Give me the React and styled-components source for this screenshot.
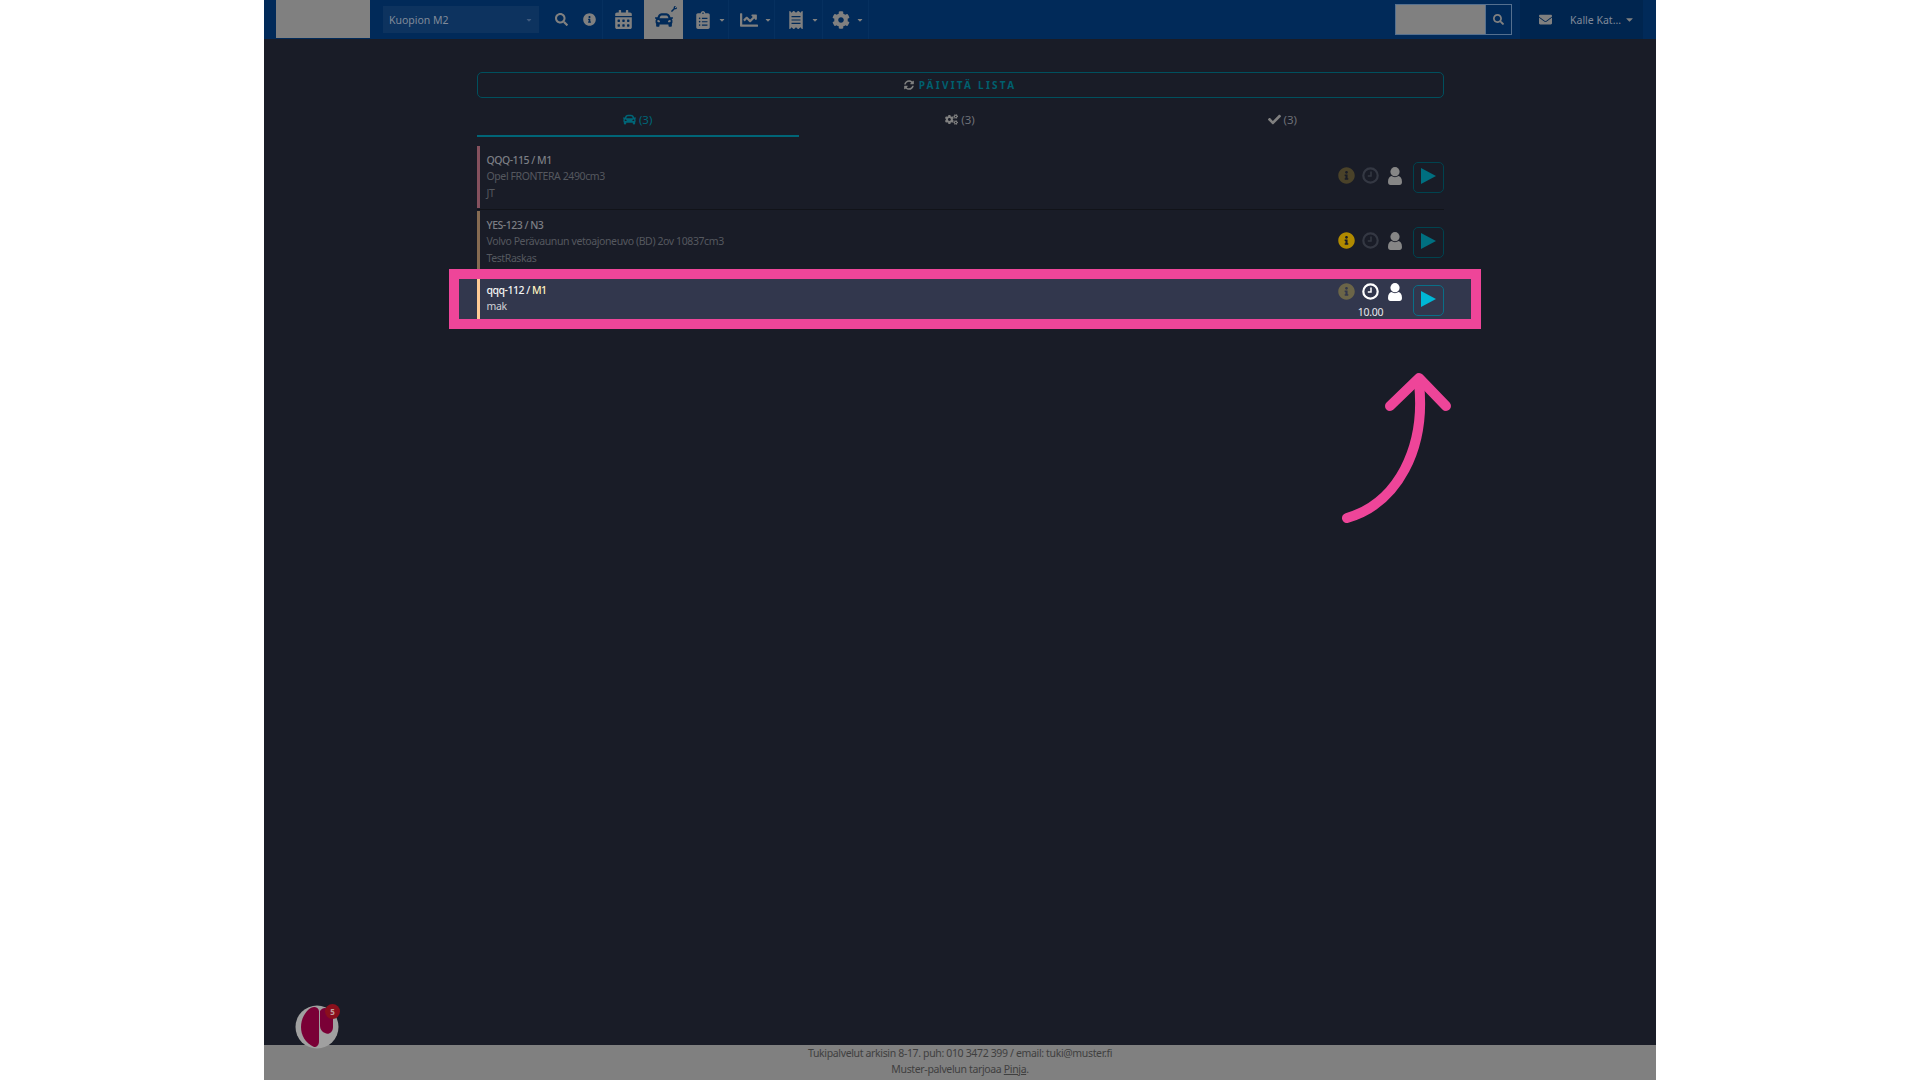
import React from "react";
import styled, { createGlobalStyle } from "styled-components";
import {
  FaSearch, FaInfoCircle, FaCalendarAlt, FaCar, FaWrench, FaClipboardList, FaChartLine,
  FaReceipt, FaCog, FaCogs, FaCaretDown, FaEnvelope, FaSyncAlt, FaCheck,
} from "react-icons/fa";

const Global = createGlobalStyle`
  html, body { margin: 0; padding: 0; background: #fff; }
  body { font-family: "Noto Sans", "Open Sans", sans-serif; }
  * { box-sizing: border-box; }
`;

const Page = styled.div`
  position: relative;
  width: 1392px;
  height: 1080px;
  margin: 0 auto;
  display: flex;
  flex-direction: column;
  background: #191c27;
`;

const Nav = styled.header`
  flex: none;
  height: 39px;
  background: #012a59;
  display: flex;
  align-items: flex-start;
  padding-left: 12px;
  color: #808080;
`;

const LogoBlock = styled.div`
  width: 94px;
  height: 38px;
  background: #808080;
`;

const SelectBox = styled.div`
  width: 156px;
  height: 27px;
  margin: 6px 7px 0 13px;
  padding: 0 6px;
  background: #0d335f;
  color: #808a99;
  font-size: 10.5px;
  display: flex;
  align-items: center;
  justify-content: space-between;
`;

const NavIcon = styled.div`
  width: ${(p) => p.$w}px;
  height: 39px;
  display: flex;
  align-items: center;
  justify-content: center;
  gap: 6px;
  padding-left: ${(p) => p.$pad || 0}px;
  font-size: ${(p) => p.$size || 18}px;
  position: relative;
  background: ${(p) => (p.$active ? "#808080" : "transparent")};
  color: ${(p) => (p.$active ? "#012a59" : "#808080")};
  border-right: ${(p) => (p.$sep ? "1px solid #06305f" : "none")};
`;

const Caret = styled(FaCaretDown)`
  font-size: ${(p) => p.$size || 8}px;
  color: ${(p) => p.$color || "#808080"};
`;

const Tool = styled(FaWrench)`
  position: absolute;
  right: 6px;
  top: 6px;
  font-size: 6px;
`;

const Spacer = styled.div`
  flex: 1;
`;

const SearchGroup = styled.div`
  width: 117px;
  height: 31px;
  margin: 4px 8px 0 0;
  display: flex;
  border: 1px solid #55708f;
`;

const SearchField = styled.div`
  width: 89px;
  background: #808080;
`;

const SearchButton = styled.div`
  flex: 1;
  display: flex;
  align-items: center;
  justify-content: center;
  color: #808080;
  font-size: 11px;
  border-left: 1px solid #55708f;
`;

const UserArea = styled.div`
  width: 123px;
  height: 39px;
  margin-right: 13px;
  background: #00254f;
  display: flex;
  align-items: center;
  padding-left: 19px;
  color: #808a99;
  font-size: 10.5px;
`;

const Mail = styled(FaEnvelope)`
  font-size: 13px;
  color: #808080;
  margin-right: 18px;
`;

const UserName = styled.span`
  margin-right: 3px;
`;

const Main = styled.main`
  flex: 1;
  width: 967px;
  margin: 0 auto;
  padding-top: 33px;
`;

const RefreshButton = styled.div`
  height: 26px;
  border: 1px solid #00505e;
  border-radius: 5px;
  display: flex;
  align-items: center;
  justify-content: center;
  gap: 5px;
  color: #00606f;
  font-size: 10px;
  font-weight: 700;
  letter-spacing: 2.25px;
`;

const RefreshIcon = styled(FaSyncAlt)`
  color: #808080;
  font-size: 10px;
`;

const Tabs = styled.div`
  display: grid;
  grid-template-columns: repeat(3, 1fr);
  height: 39px;
`;

const Tab = styled.div`
  display: flex;
  align-items: center;
  justify-content: center;
  gap: 3px;
  padding-top: 6px;
  height: 39px;
  font-size: 11.5px;
  color: ${(p) => (p.$active ? "#006577" : "#6e7077")};
  border-bottom: 2px solid ${(p) => (p.$active ? "#006577" : "transparent")};
`;

const TabIcon = styled.span`
  display: flex;
  font-size: 13px;
  color: ${(p) => (p.$active ? "#006577" : "#808080")};
`;

const List = styled.div`
  margin-top: 9px;
`;

const Row = styled.div`
  position: relative;
  height: ${(p) => (p.$highlight ? 49 : 62)}px;
  margin-bottom: 3px;
  display: flex;
  align-items: center;
  justify-content: space-between;

  &::after {
    content: "";
    position: absolute;
    left: 0;
    right: 0;
    bottom: -2px;
    height: 1px;
    background: #111319;
  }

  ${(p) =>
    p.$highlight &&
    `
    &::before {
      content: "";
      position: absolute;
      left: -18px; right: -27px; top: 3px; bottom: 6px;
      background: #32374d;
    }
    &::after {
      left: -28px; right: -37px; top: -7px; bottom: -4px;
      height: auto;
      background: transparent;
      border: 10px solid #ee4599;
      z-index: 3;
    }
  `}
`;

const Bar = styled.div`
  position: absolute;
  left: 0;
  top: ${(p) => (p.$highlight ? 3 : 0)}px;
  bottom: ${(p) => (p.$highlight ? 6 : 0)}px;
  width: 3px;
  background: ${(p) => p.$color};
  z-index: 1;
`;

const RowText = styled.div`
  position: relative;
  z-index: 1;
  padding-left: 10px;
  align-self: flex-start;
  padding-top: 6px;
  font-size: 10.5px;
  line-height: 16.4px;
`;

const Title = styled.div`
  color: ${(p) => (p.$highlight ? "#f4f4f4" : "#7c7e84")};
  font-weight: 500;
  letter-spacing: -0.5px;
`;

const Class = styled.span`
  color: ${(p) => (p.$highlight ? "#fff2c0" : "inherit")};
`;

const Sub = styled.div`
  color: ${(p) => (p.$highlight ? "#d0d0d4" : "#55585f")};
  letter-spacing: -0.4px;
`;

const Actions = styled.div`
  position: relative;
  z-index: 1;
  display: flex;
  align-items: center;
`;

const IconCluster = styled.div`
  display: flex;
  align-items: flex-start;
  margin-right: 6px;
  padding-bottom: ${(p) => (p.$highlight ? 0 : 3)}px;
`;

const IconCell = styled.div`
  width: 24px;
  display: flex;
  flex-direction: column;
  align-items: center;
`;

const IconBox = styled.div`
  height: 18px;
  display: flex;
  align-items: center;
  justify-content: center;
  font-size: ${(p) => p.$size || 16}px;
  color: ${(p) => p.$color};
`;

const Time = styled.div`
  margin-top: 4px;
  height: 14px;
  line-height: 14px;
  font-size: 10.5px;
  letter-spacing: -0.3px;
  color: #e8e8ee;
  white-space: nowrap;
`;

const PlayButton = styled.div`
  width: 31px;
  height: 31px;
  padding-bottom: 3px;
  border: 1px solid ${(p) => (p.$highlight ? "#0a6f87" : "#00434f")};
  border-radius: 5px;
  display: flex;
  align-items: center;
  justify-content: center;
  color: ${(p) => (p.$highlight ? "#00b7d6" : "#006f80")};
`;

const Footer = styled.footer`
  flex: none;
  height: 35px;
  background: #808080;
  color: #3f3f3f;
  font-size: 10.5px;
  letter-spacing: -0.35px;
  line-height: 16px;
  text-align: center;
`;

const FooterLink = styled.span`
  text-decoration: underline;
`;

const Arrow = styled.svg`
  position: absolute;
  left: 1072px;
  top: 363px;
`;

const Chat = styled.div`
  position: absolute;
  left: 31px;
  top: 1005px;
  width: 44px;
  height: 44px;
`;

const ChatBadge = styled.div`
  position: absolute;
  left: 30px;
  top: -1px;
  width: 15px;
  height: 15px;
  border-radius: 50%;
  background: #8a0f1c;
  color: #c0a0a0;
  font-size: 8px;
  font-weight: 700;
  display: flex;
  align-items: center;
  justify-content: center;
`;

const ClockIcon = () => (
  <svg width="17" height="17" viewBox="0 0 17 17" fill="none" stroke="currentColor">
    <circle cx="8.5" cy="8.5" r="7.2" strokeWidth="2.2" />
    <path d="M9 4.5V9H5.8" strokeWidth="1.5" />
  </svg>
);

const PersonIcon = () => (
  <svg width="14" height="18" viewBox="0 0 14 18" fill="currentColor">
    <circle cx="7" cy="4.7" r="4.6" />
    <path d="M0 15C0 11.5 1.5 9.2 3.8 9C5.2 10.5 8.8 10.5 10.2 9C12.5 9.2 14 11.5 14 15C14 17 13 18 11.5 18H2.5C1 18 0 17 0 15Z" />
  </svg>
);

const PlayIcon = () => (
  <svg width="15" height="16" viewBox="0 0 15 16" fill="currentColor">
    <path d="M0 0L15 8L0 16Z" />
  </svg>
);

const rows = [
  { title: "QQQ-115", cls: "M1", lines: ["Opel FRONTERA 2490cm3", "JT"], bar: "#85515e", info: "#4a4229" },
  { title: "YES-123", cls: "N3", lines: ["Volvo Perävaunun vetoajoneuvo (BD) 2ov 10837cm3", "TestRaskas"], bar: "#866b52", info: "#b08a00" },
  { title: "qqq-112", cls: "M1", lines: ["mak"], bar: "#ffcb96", info: "#6b6548", highlight: true, time: "10.00" },
];

export default function App() {
  return (
    <Page>
      <Global />
      <Nav>
        <LogoBlock />
        <SelectBox>
          Kuopion M2
          <Caret $color="#3f5a7d" />
        </SelectBox>
        <NavIcon $w={30} $size={13}><FaSearch /></NavIcon>
        <NavIcon $w={27} $size={13} $sep><FaInfoCircle /></NavIcon>
        <NavIcon $w={41} $size={19}><FaCalendarAlt /></NavIcon>
        <NavIcon $w={39} $active $size={18}>
          <FaCar />
          <Tool />
        </NavIcon>
        <NavIcon $w={46} $sep $pad={8}><FaClipboardList /><Caret /></NavIcon>
        <NavIcon $w={46} $sep $pad={8}><FaChartLine /><Caret /></NavIcon>
        <NavIcon $w={48} $sep $pad={8}><FaReceipt /><Caret /></NavIcon>
        <NavIcon $w={46} $sep $pad={4}><FaCog /><Caret /></NavIcon>
        <Spacer />
        <SearchGroup>
          <SearchField />
          <SearchButton><FaSearch /></SearchButton>
        </SearchGroup>
        <UserArea>
          <Mail />
          <UserName>Kalle Kat...</UserName>
          <Caret $size={11} />
        </UserArea>
      </Nav>

      <Main>
        <RefreshButton>
          <RefreshIcon />
          PÄIVITÄ LISTA
        </RefreshButton>
        <Tabs>
          <Tab $active><TabIcon $active><FaCar /></TabIcon>(3)</Tab>
          <Tab><TabIcon><FaCogs /></TabIcon>(3)</Tab>
          <Tab><TabIcon><FaCheck /></TabIcon>(3)</Tab>
        </Tabs>
        <List>
          {rows.map((r) => (
            <Row key={r.title} $highlight={r.highlight}>
              <Bar $color={r.bar} $highlight={r.highlight} />
              <RowText>
                <Title $highlight={r.highlight}>
                  {r.title} / <Class $highlight={r.highlight}>{r.cls}</Class>
                </Title>
                {r.lines.map((l) => (
                  <Sub key={l} $highlight={r.highlight}>{l}</Sub>
                ))}
              </RowText>
              <Actions>
                <IconCluster $highlight={r.highlight}>
                  <IconCell>
                    <IconBox $color={r.info} $size={17}><FaInfoCircle /></IconBox>
                  </IconCell>
                  <IconCell>
                    <IconBox $color={r.highlight ? "#ffffff" : "#343843"}><ClockIcon /></IconBox>
                    {r.time && <Time>{r.time}</Time>}
                  </IconCell>
                  <IconCell>
                    <IconBox $color={r.highlight ? "#ffffff" : "#868686"}><PersonIcon /></IconBox>
                  </IconCell>
                </IconCluster>
                <PlayButton $highlight={r.highlight}><PlayIcon /></PlayButton>
              </Actions>
            </Row>
          ))}
        </List>
      </Main>

      <Footer>
        Tukipalvelut arkisin 8-17. puh: 010 3472 399 / email: tuki@muster.fi
        <br />
        Muster-palvelun tarjoaa <FooterLink>Pinja</FooterLink>.
      </Footer>

      <Arrow width="120" height="170" viewBox="0 0 120 170" fill="none" stroke="#ee4599" strokeWidth="10" strokeLinecap="round" strokeLinejoin="round">
        <path d="M11 155 C 62 140, 90 85, 83 20" />
        <path d="M54 43 L83 15 L110 43" />
      </Arrow>

      <Chat>
        <svg width="44" height="44" viewBox="0 0 44 44">
          <circle cx="22" cy="22" r="21.5" fill="#a0a0a0" />
          <path d="M13 5 C17 1 23 1 24 6 L24 36 C24 40 22 42 19 42 C10 38 6 30 6 22 C6 15 9 9 13 5Z" fill="#7a0036" />
          <path d="M25 6 C27 3 30 2 33 4 L38 10 L38 22 C38 28 33 30 30 28 C27 27 25 24 25 21Z" fill="#7a0036" />
        </svg>
        <ChatBadge>5</ChatBadge>
      </Chat>
    </Page>
  );
}
